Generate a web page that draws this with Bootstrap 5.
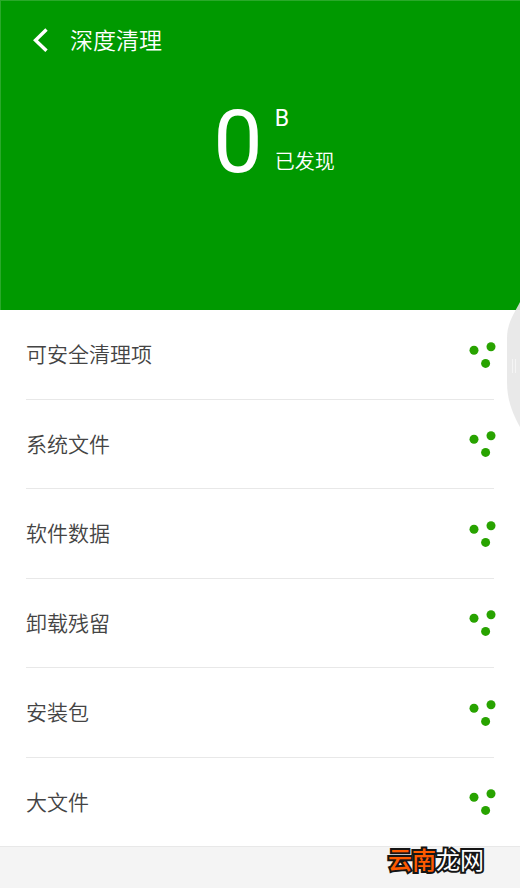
<!DOCTYPE html>
<html lang="zh-CN">
<head>
<meta charset="utf-8">
<meta name="viewport" content="width=device-width, initial-scale=1">
<title>深度清理</title>
<link href="https://cdn.jsdelivr.net/npm/bootstrap@5.3.0/dist/css/bootstrap.min.css" rel="stylesheet">
<style>
body { font-family: Roboto, "Noto Sans CJK SC", sans-serif; color: #444; background: #fff; }
.hero { background: #009900; min-height: 310px; box-shadow: inset 1px 1px 0 #2aa92a; }
.hero-bar { padding: 20px 32px; gap: 22px; }
.hero-title { font-size: 23px; line-height: 36px; padding-top: 4px; font-weight: 350; }
.back-btn { line-height: 0; }
.total { padding-top: 16px; padding-left: 28px; gap: 12px; }
.total-number { font-size: 88px; line-height: 92px; }
.total-side { padding-top: 8px; gap: 12px; }
.total-unit { font-size: 23px; line-height: 30px; }
.total-label { font-size: 20px; line-height: 32px; font-weight: 350; }
.clean-list { padding: 0 26px; }
.clean-item { font-size: 21px; font-weight: 350; flex: 1 1 0; min-height: 64px; padding-top: 3px; border-bottom: 1px solid #e8e8e8; }
.clean-item:last-child { border-bottom: 0; }
.dots { fill: #28a300; overflow: visible; }
.foot { background: #f4f4f4; border-top: 1px solid #e8e8e8; min-height: 42px; padding: 0 36px; }
.brand-text { font-family: "Noto Sans CJK SC", sans-serif; font-size: 24px; line-height: 24px; font-weight: 400; color: #fff; -webkit-text-stroke: 4px #151515; paint-order: stroke fill; }
.brand-hot { color: #ff5a00; font-weight: 500; }
.side-handle { right: 0; top: 300px; }
</style>
<script src="https://cdn.jsdelivr.net/npm/bootstrap@5.3.0/dist/js/bootstrap.bundle.min.js"></script>
</head>
<body>
<div class="d-flex flex-column min-vh-100 position-relative">
  <header class="hero text-white">
    <div class="hero-bar d-flex align-items-center">
      <button type="button" class="back-btn btn p-0 border-0 text-white" aria-label="返回">
        <svg width="16" height="24" viewBox="0 0 16 24" fill="none" stroke="currentColor" stroke-width="3.4"><path d="M14.500 1.500 3.500 12.200 14.500 22.800"/></svg>
      </button>
      <h1 class="hero-title m-0">深度清理</h1>
    </div>
    <div class="total d-flex justify-content-center">
      <div class="total-number">0</div>
      <div class="total-side d-flex flex-column">
        <div class="total-unit">B</div>
        <div class="total-label">已发现</div>
      </div>
    </div>
  </header>
  <svg width="0" height="0" class="position-absolute" aria-hidden="true">
    <symbol id="dots" viewBox="0 0 26 26" overflow="visible"><circle cx="6" cy="7.3" r="4.5"/><circle cx="23" cy="3.8" r="4.5"/><circle cx="17.6" cy="20.4" r="4.5"/></symbol>
  </svg>
  <main class="flex-fill d-flex">
    <ul class="clean-list list-unstyled m-0 w-100 d-flex flex-column">
      <li class="clean-item d-flex align-items-center justify-content-between"><span>可安全清理项</span><svg class="dots" width="26" height="26"><use href="#dots"/></svg></li>
      <li class="clean-item d-flex align-items-center justify-content-between"><span>系统文件</span><svg class="dots" width="26" height="26"><use href="#dots"/></svg></li>
      <li class="clean-item d-flex align-items-center justify-content-between"><span>软件数据</span><svg class="dots" width="26" height="26"><use href="#dots"/></svg></li>
      <li class="clean-item d-flex align-items-center justify-content-between"><span>卸载残留</span><svg class="dots" width="26" height="26"><use href="#dots"/></svg></li>
      <li class="clean-item d-flex align-items-center justify-content-between"><span>安装包</span><svg class="dots" width="26" height="26"><use href="#dots"/></svg></li>
      <li class="clean-item d-flex align-items-center justify-content-between"><span>大文件</span><svg class="dots" width="26" height="26"><use href="#dots"/></svg></li>
    </ul>
  </main>
  <footer class="foot d-flex justify-content-end align-items-start">
    <span class="brand-text"><span class="brand-hot">云南</span>龙网</span>
  </footer>
  <svg class="side-handle position-absolute" width="14" height="128" viewBox="0 0 14 128" aria-hidden="true">
    <path d="M14 2C9 12 1 23 1 38V82C1 102 8 116 14 127Z" fill="#e6e6e6" fill-opacity=".88"/>
    <path d="M6.500 59V73M9.500 59V73" stroke="#f5f5f5" stroke-width="1"/>
  </svg>
</div>
</body>
</html>
